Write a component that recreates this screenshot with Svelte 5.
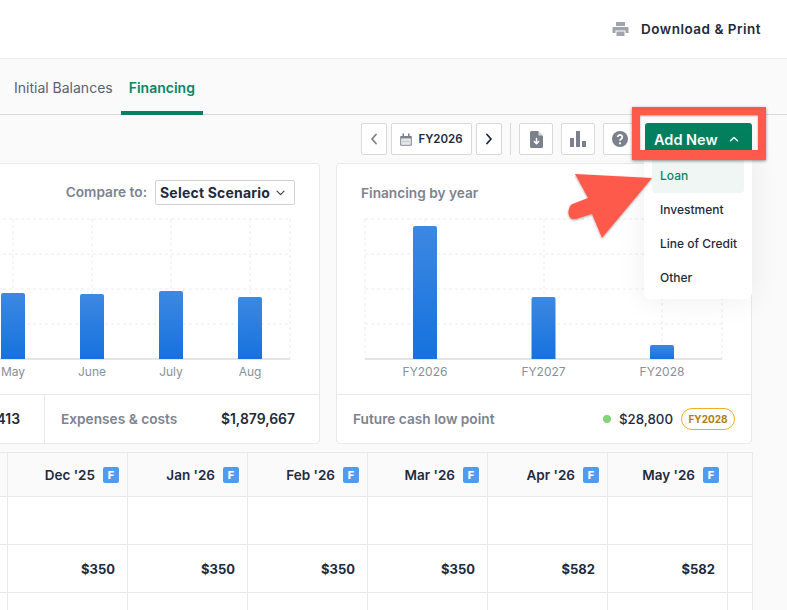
<script>
	const leftBars = [
		{ label: 'May', x: 13, top: 293 },
		{ label: 'June', x: 92, top: 294 },
		{ label: 'July', x: 171, top: 291 },
		{ label: 'Aug', x: 250, top: 297 }
	];
	const rightBars = [
		{ label: 'FY2026', x: 425, top: 226 },
		{ label: 'FY2027', x: 543.5, top: 297 },
		{ label: 'FY2028', x: 662, top: 345 }
	];
	const gridY = [219, 254, 289, 324];
	const leftGridX = [13, 92, 171, 250, 290];
	const rightGridX = [365, 425, 544, 662, 722];

	const months = ["Dec '25", "Jan '26", "Feb '26", "Mar '26", "Apr '26", "May '26"];
	const amounts = ['$350', '$350', '$350', '$350', '$582', '$582'];
	const menu = ['Loan', 'Investment', 'Line of Credit', 'Other'];
</script>

<div class="page">
	<header class="top">
		<svg class="printer" width="17" height="16" viewBox="0 0 17 16">
			<path d="M4 1h9v4H4zM1.500 6h14a1 1 0 0 1 1 1v5h-3v-2.500h-10V12H.5V7a1 1 0 0 1 1-1zM4.500 10.500h8V15h-8z" fill="#a0a4ac" />
		</svg>
		<span>Download &amp; Print</span>
	</header>

	<nav class="tabs">
		<div class="tab">Initial Balances</div>
		<div class="tab active">Financing</div>
	</nav>

	<div class="toolbar">
		<button class="tool nav">
			<svg width="8" height="12" viewBox="0 0 8 12"><path d="M6 1.500 2 6l4 4.500" fill="none" stroke="#7b818c" stroke-width="1.800" stroke-linecap="round" stroke-linejoin="round" /></svg>
		</button>
		<button class="tool year">
			<svg width="12" height="13" viewBox="0 0 12 13">
				<path d="M1 3h10a.8.8 0 0 1 .8.800V12a.8.8 0 0 1-.8.800H1a.8.8 0 0 1-.8-.800V3.800A.8.8 0 0 1 1 3z" fill="#7b818c" />
				<rect x="2.500" y="0.500" width="1.500" height="3" fill="#7b818c" />
				<rect x="8" y="0.500" width="1.500" height="3" fill="#7b818c" />
				<rect x="1.300" y="5.500" width="9.400" height="6.200" fill="#fff" />
				<path d="M2.500 7h7M2.500 8.500h7M2.500 10h7" stroke="#7b818c" stroke-width="0.800" stroke-dasharray="1 1" />
			</svg>
			<span>FY2026</span>
		</button>
		<button class="tool nav">
			<svg width="8" height="12" viewBox="0 0 8 12"><path d="M2 1.500 6 6l-4 4.500" fill="none" stroke="#1f2a3d" stroke-width="1.800" stroke-linecap="round" stroke-linejoin="round" /></svg>
		</button>
		<div class="divider"></div>
		<button class="tool square">
			<svg width="13" height="17" viewBox="0 0 13 17">
				<path d="M1.500 0H8l5 5v10.500a1.500 1.500 0 0 1-1.500 1.500h-10A1.500 1.500 0 0 1 0 15.500v-14A1.500 1.500 0 0 1 1.500 0z" fill="#7b818c" />
				<path d="M8.500 0v4.500H13z" fill="#d5d7db" />
				<path d="M6.500 7.500v5M4.300 10.500l2.200 2.300 2.200-2.300" fill="none" stroke="#fff" stroke-width="1.500" stroke-linecap="round" stroke-linejoin="round" />
			</svg>
		</button>
		<button class="tool square">
			<svg width="16" height="16" viewBox="0 0 16 16" fill="#7b818c">
				<rect x="0" y="7" width="4" height="9" />
				<rect x="6" y="0" width="4" height="16" />
				<rect x="12" y="10" width="4" height="6" />
			</svg>
		</button>
		<button class="tool square">
			<svg width="16" height="16" viewBox="0 0 16 16">
				<circle cx="8" cy="8" r="8" fill="#7b818c" />
				<path d="M5.700 6.100a2.300 2.300 0 1 1 3.500 2c-.8.500-1.200.800-1.200 1.600" fill="none" stroke="#fff" stroke-width="1.700" />
				<circle cx="8" cy="12.300" r="1.100" fill="#fff" />
			</svg>
		</button>
		<button class="add">
			<span>Add New</span>
			<svg width="10" height="6" viewBox="0 0 10 6"><path d="M1.500 4.800 5 1.500l3.500 3.300" fill="none" stroke="#fff" stroke-width="1.400" stroke-linecap="round" stroke-linejoin="round" /></svg>
		</button>
	</div>

	<section class="cards">
		<article class="card wide">
			<div class="card-head compare">
				<span class="muted">Compare to:</span>
				<div class="select">
					<span>Select Scenario</span>
					<svg width="9" height="6" viewBox="0 0 9 6"><path d="M1 1.200 4.500 4.700 8 1.200" fill="none" stroke="#3a4354" stroke-width="1.200" stroke-linecap="round" stroke-linejoin="round" /></svg>
				</div>
			</div>
			<svg class="chart" width="418" height="189" viewBox="-99 205 418 189">
				<defs>
					<linearGradient id="bar" x1="0" y1="0" x2="0" y2="1">
						<stop offset="0" stop-color="#3d88e2" />
						<stop offset="1" stop-color="#1572de" />
					</linearGradient>
				</defs>
				{#each gridY as y}
					<line class="grid" x1="-99" x2="290" y1={y} y2={y} />
				{/each}
				{#each leftGridX as x}
					<line class="grid" x1={x} x2={x} y1="219" y2="359" />
				{/each}
				<line class="base" x1="-99" x2="290" y1="359" y2="359" />
				{#each leftBars as b}
					<path d="M{b.x - 12} 359V{b.top + 2}a2 2 0 0 1 2-2h20a2 2 0 0 1 2 2V359z" fill="url(#bar)" />
					<text class="tick" x={b.x} y="376" text-anchor="middle">{b.label}</text>
				{/each}
			</svg>
			<div class="card-foot">
				<div class="stat first"><span class="value">$1,204,413</span></div>
				<div class="stat second">
					<span class="muted">Expenses &amp; costs</span>
					<span class="value">$1,879,667</span>
				</div>
			</div>
		</article>

		<article class="card">
			<div class="card-head title"><span class="muted">Financing by year</span></div>
			<svg class="chart" width="414" height="189" viewBox="337 205 414 189">
				<defs>
					<linearGradient id="bar2" x1="0" y1="0" x2="0" y2="1">
						<stop offset="0" stop-color="#3d88e2" />
						<stop offset="1" stop-color="#1572de" />
					</linearGradient>
				</defs>
				{#each gridY as y}
					<line class="grid" x1="365" x2="722" y1={y} y2={y} />
				{/each}
				{#each rightGridX as x}
					<line class="grid" x1={x} x2={x} y1="219" y2="359" />
				{/each}
				<line class="base" x1="365" x2="722" y1="359" y2="359" />
				{#each rightBars as b}
					<path d="M{b.x - 12} 359V{b.top + 2}a2 2 0 0 1 2-2h20a2 2 0 0 1 2 2V359z" fill="url(#bar2)" />
					<text class="tick" x={b.x} y="376" text-anchor="middle">{b.label}</text>
				{/each}
			</svg>
			<div class="card-foot low">
				<span class="muted">Future cash low point</span>
				<span class="dot"></span>
				<span class="amount">$28,800</span>
				<span class="pill">FY2028</span>
			</div>
		</article>
	</section>

	<section class="table">
		<div class="cell head"></div>
		{#each months as m}
			<div class="cell head">
				<span>{m}</span>
				<span class="badge">F</span>
			</div>
		{/each}
		<div class="cell head"></div>

		<div class="cell"></div>
		{#each months as _}
			<div class="cell"></div>
		{/each}
		<div class="cell"></div>

		<div class="cell"></div>
		{#each amounts as a}
			<div class="cell num">{a}</div>
		{/each}
		<div class="cell"></div>

		<div class="cell"></div>
		{#each amounts as _}
			<div class="cell"></div>
		{/each}
		<div class="cell"></div>
	</section>

	<div class="menu">
		{#each menu as item, i}
			<div class="menu-item" class:current={i === 0}>{item}</div>
		{/each}
	</div>

	<div class="highlight"></div>

	<svg class="pointer" width="100" height="80" viewBox="560 168 100 80">
		<defs>
			<filter id="soft" x="-30%" y="-30%" width="160%" height="160%">
				<feDropShadow dx="0" dy="1" stdDeviation="1.200" flood-color="#000" flood-opacity="0.350" />
			</filter>
		</defs>
		<path d="M575 174 652 178 602 238 592 214 576 219C570 221 567 214 569 209 570 205 572 204 575 203L588 198z" fill="#fe5a4b" filter="url(#soft)" />
	</svg>
</div>

<style>
	:global(body) {
		margin: 0;
		background: #fafafa;
	}

	.page {
		position: relative;
		width: 787px;
		height: 610px;
		overflow: hidden;
		background: #fafafa;
		font-family: 'Inter', 'Open Sans', sans-serif;
		color: #1f2a3d;
	}

	.top {
		display: flex;
		align-items: center;
		justify-content: flex-end;
		gap: 12px;
		height: 57px;
		padding: 0 26px 1px 0;
		background: #fff;
		border-bottom: 1px solid #ebebeb;
		font-size: 13.500px;
		font-weight: 600;
		letter-spacing: 0.5px;
	}

	.tabs {
		display: flex;
		height: 55px;
		padding-left: 6px;
		border-bottom: 1px solid #d9d9d9;
	}

	.tab {
		padding: 20px 8px 0;
		font-size: 14px;
		color: #5a6272;
	}

	.tab.active {
		margin-bottom: -1px;
		color: #0b8563;
		font-weight: 600;
		border-bottom: 4px solid #038060;
	}

	.toolbar {
		display: flex;
		align-items: flex-start;
		justify-content: flex-end;
		height: 40px;
		padding: 8px 35px 0 0;
	}

	.tool {
		display: flex;
		align-items: center;
		justify-content: center;
		height: 32px;
		padding: 0;
		background: #fff;
		border: 1px solid #d9d9d9;
		border-radius: 2px;
		font-family: inherit;
		color: #1f2a3d;
	}

	.nav {
		width: 26px;
	}

	.year {
		gap: 6px;
		width: 81px;
		margin: 0 4px;
		font-size: 11.500px;
		font-weight: 600;
	}

	.divider {
		width: 1px;
		height: 32px;
		margin: 0 8px;
		background: #d9d9d9;
	}

	.square {
		width: 34px;
		margin-right: 8px;
	}

	.add {
		display: flex;
		align-items: center;
		gap: 11px;
		width: 107px;
		height: 32px;
		padding: 0 0 0 9px;
		background: #038060;
		border: none;
		border-radius: 3px;
		color: #fff;
		font-family: inherit;
		font-size: 14.500px;
		font-weight: 600;
	}

	.cards {
		display: flex;
		justify-content: flex-end;
		gap: 16px;
		padding-right: 35px;
	}

	.card {
		flex: none;
		display: flex;
		flex-direction: column;
		width: 416px;
		height: 281px;
		box-sizing: border-box;
		background: #fff;
		border: 1px solid #e9e9e9;
		border-radius: 4px;
	}

	.card.wide {
		width: 420px;
	}

	.card-head {
		display: flex;
		align-items: flex-end;
		height: 41px;
		flex: none;
		box-sizing: border-box;
	}

	.compare {
		justify-content: flex-end;
		gap: 8px;
		padding-right: 24px;
	}

	.compare .muted {
		height: 25px;
		line-height: 25px;
	}

	.title {
		padding: 0 0 4px 24px;
	}

	.muted {
		color: #7d8390;
		font-weight: 600;
		font-size: 13.700px;
	}

	.select {
		display: flex;
		align-items: center;
		justify-content: space-between;
		box-sizing: border-box;
		width: 140px;
		height: 25px;
		padding: 0 9px 0 4px;
		border: 1px solid #d2d2d2;
		border-radius: 2px;
		font-size: 14px;
		font-weight: 700;
		letter-spacing: 0.2px;
	}

	.chart {
		display: block;
		flex: none;
	}

	.grid {
		stroke: #ececec;
		stroke-dasharray: 3 3;
		stroke-width: 1;
	}

	.base {
		stroke: #dcdcdc;
		stroke-width: 1.500;
	}

	.tick {
		font-size: 12px;
		fill: #8a8f9a;
		font-family: 'Inter', sans-serif;
	}

	.card-foot {
		display: flex;
		align-items: center;
		flex: 1;
		border-top: 1px solid #e9e9e9;
	}

	.stat {
		display: flex;
		align-items: center;
		height: 100%;
		box-sizing: border-box;
	}

	.first {
		width: 144px;
		justify-content: flex-end;
		padding-right: 24px;
		border-right: 1px solid #e9e9e9;
	}

	.second {
		flex: 1;
		justify-content: space-between;
		padding: 0 24px 0 16px;
	}

	.value {
		font-size: 13.900px;
		font-weight: 600;
	}

	.low {
		padding: 0 16px;
	}

	.dot {
		width: 8px;
		height: 8px;
		margin-left: auto;
		background: #86d278;
		border-radius: 50%;
	}

	.amount {
		margin-left: 8px;
		font-size: 13.300px;
		font-weight: 500;
	}

	.pill {
		display: flex;
		align-items: center;
		justify-content: center;
		box-sizing: border-box;
		width: 54px;
		height: 22px;
		margin-left: 8px;
		border: 1px solid #f2ae1c;
		border-radius: 11px;
		font-size: 10px;
		font-weight: 700;
		color: #b27d10;
	}

	.table {
		display: grid;
		grid-template-columns: 8px repeat(6, 120px) 24px;
		grid-template-rows: 44px 48px 48px 48px;
		width: 753px;
		margin-top: 8px;
		box-sizing: border-box;
		background: #fff;
		border-top: 1px solid #e9e9e9;
		border-right: 1px solid #e9e9e9;
	}

	.cell {
		display: flex;
		align-items: center;
		justify-content: flex-end;
		box-sizing: border-box;
		padding-right: 12px;
		border-right: 1px solid #e9e9e9;
		border-bottom: 1px solid #e9e9e9;
		font-size: 13.500px;
		font-weight: 600;
	}

	.cell:nth-child(8n) {
		border-right: none;
	}

	.head {
		gap: 8px;
		padding-right: 8px;
		background: #fafafa;
	}

	.cell:nth-child(8n + 1),
	.cell:nth-child(8n) {
		padding: 0;
	}

	.num {
		font-size: 13px;
		font-weight: 700;
	}

	.badge {
		display: flex;
		align-items: center;
		justify-content: center;
		width: 16px;
		height: 16px;
		background: #4f9bf0;
		border-radius: 2px;
		color: #fff;
		font-size: 11px;
		font-weight: 800;
	}

	.menu {
		position: absolute;
		top: 150px;
		left: 644px;
		display: flex;
		flex-direction: column;
		box-sizing: border-box;
		width: 108px;
		height: 149px;
		padding: 9px 8px 0;
		background: #fff;
		border-radius: 6px;
		box-shadow: 0 2px 30px rgba(0, 0, 0, 0.07);
	}

	.menu-item {
		display: flex;
		align-items: center;
		height: 34px;
		padding: 0 0 2px 8px;
		box-sizing: border-box;
		border-radius: 4px;
		font-size: 12px;
		font-weight: 500;
		color: #1f2a3d;
	}

	.menu-item.current {
		background: #f0f6f3;
		color: #0b8563;
	}

	.highlight {
		position: absolute;
		top: 107px;
		left: 632px;
		box-sizing: border-box;
		width: 134px;
		height: 53px;
		border: 8px solid #fe5a4b;
		border-bottom-width: 10px;
		box-shadow: 0 1px 3px rgba(0, 0, 0, 0.45), inset 0 1px 2px rgba(0, 0, 0, 0.35);
	}

	.pointer {
		position: absolute;
		top: 168px;
		left: 560px;
	}
</style>
